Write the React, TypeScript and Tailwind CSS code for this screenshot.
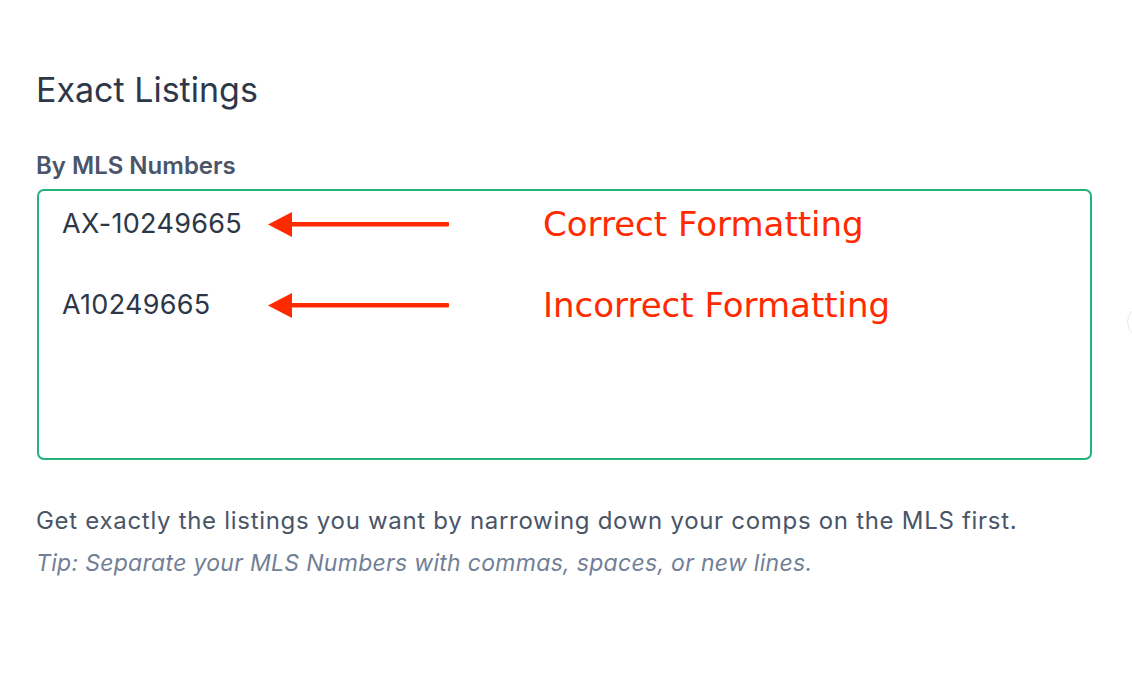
import React from "react";

function Arrow() {
  return (
    <svg width="182" height="26" viewBox="0 0 182 26" className="block">
      <polygon points="0,13.5 24,1 24,26" fill="#ff2a00" />
      <rect x="22" y="11" width="159" height="4.4" rx="1" fill="#ff2a00" />
    </svg>
  );
}

export default function App() {
  const inter = { fontFamily: "Inter, 'Noto Sans', sans-serif" };
  const red = { fontFamily: "'DejaVu Sans', sans-serif" };
  return (
    <div className="relative w-[1132px] h-[674px] bg-white overflow-hidden" style={inter}>
      <div className="pl-[36px] pt-[70px] pr-[40px]">
        <h1 className="text-[34px] leading-[40px] font-normal text-[#2d3748]">Exact Listings</h1>
        <div className="mt-[42px] text-[24px] leading-[28px] font-semibold text-[#4a5568]">By MLS Numbers</div>
        <div className="mt-[9px] ml-px w-[1055px] h-[271px] rounded-[7px] border-2 border-[#22b37a] pl-[23px] pt-[13px]">
          <div className="grid grid-cols-[206px_182px_1fr] gap-y-[41px] items-center">
            <div className="text-[27px] leading-[40px] tracking-[0.3px] text-[#2d3748]">AX-10249665</div>
            <Arrow />
            <div className="pl-[93px] text-[34px] leading-[40px] text-[#ff2a00]" style={red}>
              Correct Formatting
            </div>
            <div className="text-[27px] leading-[40px] tracking-[0.3px] text-[#2d3748]">A10249665</div>
            <Arrow />
            <div className="pl-[93px] text-[34px] leading-[40px] text-[#ff2a00]" style={red}>
              Incorrect Formatting
            </div>
          </div>
        </div>
        <p className="mt-[45px] text-[24px] leading-[32px] tracking-[0.7px] text-[#4a5568]">
          Get exactly the listings you want by narrowing down your comps on the MLS first.
        </p>
        <p className="mt-[12px] text-[23px] leading-[28px] tracking-[0.3px] italic text-[#718096]">
          Tip: Separate your MLS Numbers with commas, spaces, or new lines.
        </p>
      </div>
      <div className="absolute left-[1127px] top-[306px] w-[32px] h-[32px] rounded-full border border-[#e2e8f0] bg-white" />
    </div>
  );
}
